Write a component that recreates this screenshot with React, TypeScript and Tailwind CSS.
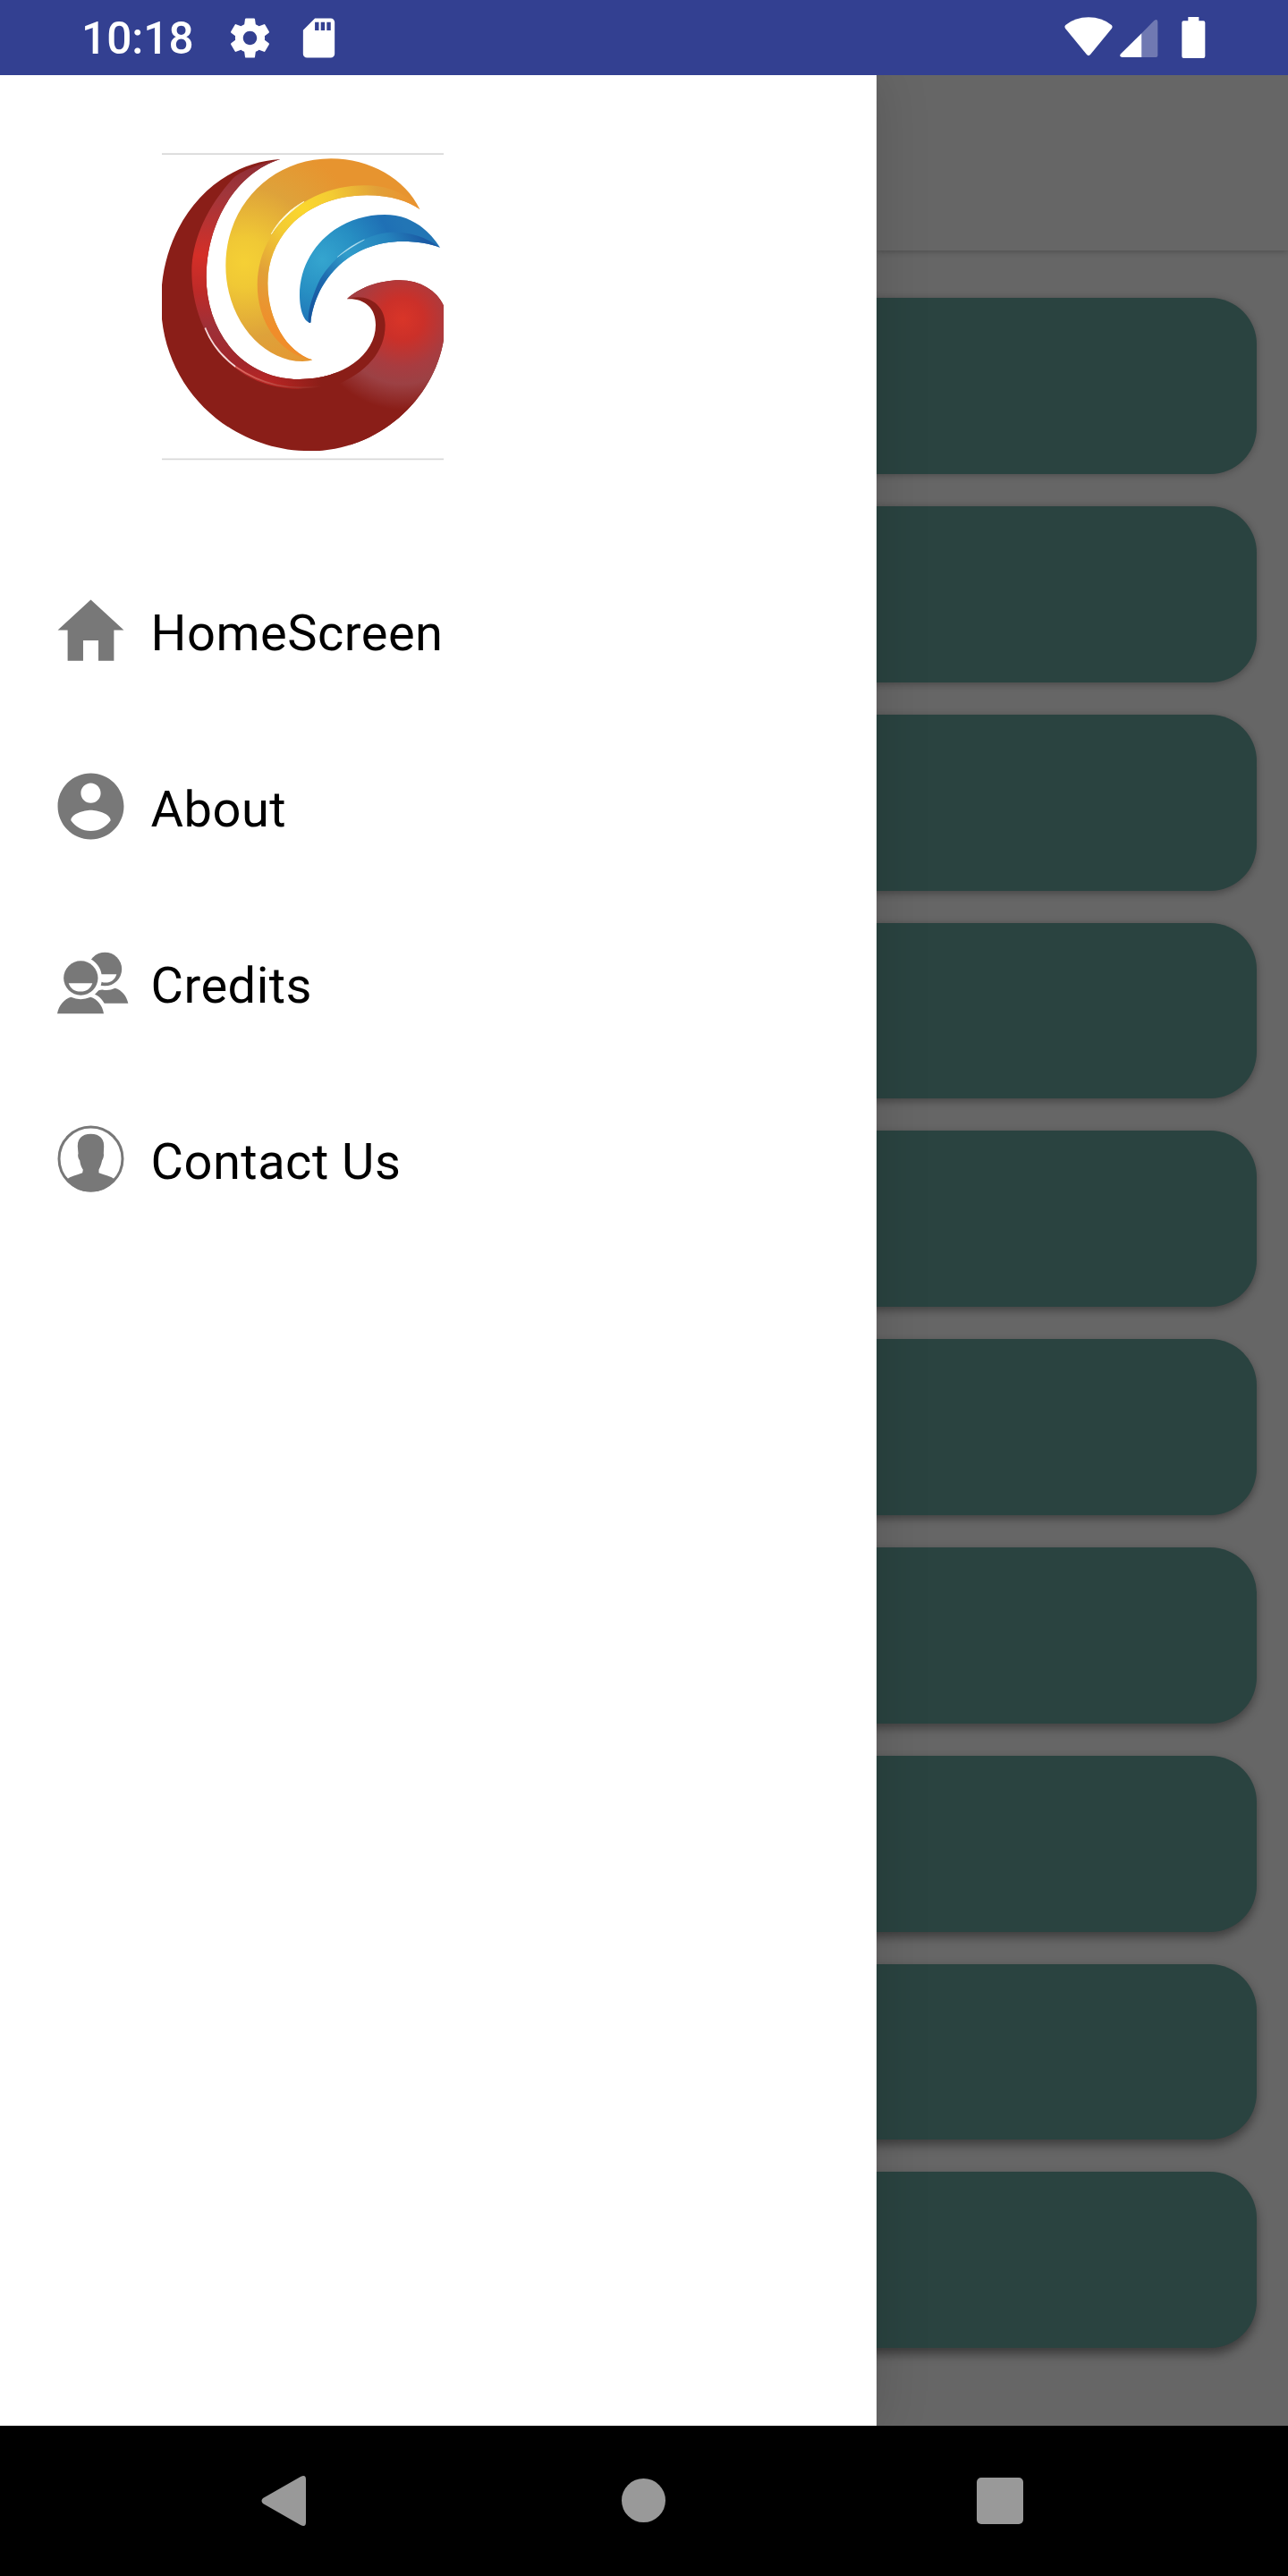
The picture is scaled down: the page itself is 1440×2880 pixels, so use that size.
import type { ReactNode } from 'react';
import { IoMdContact, IoMdHome } from 'react-icons/io';

function Logo() {
  return (
    <svg className="block h-[345px] w-[315px]" viewBox="63 60 945 1035">
      <defs>
        <linearGradient id="redBand" gradientUnits="userSpaceOnUse" x1="400" y1="84" x2="400" y2="850">
          <stop offset="0" stopColor="#8e2c34" />
          <stop offset="0.15" stopColor="#a0363b" />
          <stop offset="0.42" stopColor="#d42f28" />
          <stop offset="0.58" stopColor="#bd2a28" />
          <stop offset="0.74" stopColor="#9e3038" />
          <stop offset="0.9" stopColor="#a3262a" />
          <stop offset="1" stopColor="#c02522" />
        </linearGradient>
        <linearGradient id="bandFade" gradientUnits="userSpaceOnUse" x1="420" y1="0" x2="600" y2="0">
          <stop offset="0" stopColor="#8a1e18" stopOpacity="0" />
          <stop offset="1" stopColor="#8a1e18" />
        </linearGradient>
        <linearGradient id="rimLight" gradientUnits="userSpaceOnUse" x1="320" y1="0" x2="600" y2="0">
          <stop offset="0" stopColor="#e06a62" />
          <stop offset="1" stopColor="#8a1e18" />
        </linearGradient>
        <radialGradient id="redTip" gradientUnits="userSpaceOnUse" cx="870" cy="620" r="320">
          <stop offset="0" stopColor="#d93528" />
          <stop offset="0.22" stopColor="#cb3029" />
          <stop offset="0.5" stopColor="#a83c40" />
          <stop offset="0.68" stopColor="#9c4144" />
          <stop offset="0.95" stopColor="#8a1e18" />
        </radialGradient>
        <radialGradient id="gold" gradientUnits="userSpaceOnUse" cx="340" cy="430" r="420">
          <stop offset="0" stopColor="#f5d035" />
          <stop offset="0.2" stopColor="#f0c835" />
          <stop offset="0.6" stopColor="#dea23a" />
          <stop offset="1" stopColor="#e7942f" />
        </radialGradient>
        <radialGradient id="goldBand" gradientUnits="userSpaceOnUse" cx="540" cy="250" r="420">
          <stop offset="0" stopColor="#fbd72d" />
          <stop offset="0.25" stopColor="#f3cb33" />
          <stop offset="0.6" stopColor="#e2a038" />
          <stop offset="1" stopColor="#f08d2a" />
        </radialGradient>
        <radialGradient id="sky" gradientUnits="userSpaceOnUse" cx="600" cy="420" r="300">
          <stop offset="0" stopColor="#35a5cf" />
          <stop offset="0.4" stopColor="#278fc3" />
          <stop offset="0.8" stopColor="#1f70b5" />
          <stop offset="1" stopColor="#2275b5" />
        </radialGradient>
        <linearGradient id="skyBand" gradientUnits="userSpaceOnUse" x1="550" y1="630" x2="940" y2="350">
          <stop offset="0" stopColor="#15539b" />
          <stop offset="0.25" stopColor="#1d66ac" />
          <stop offset="0.5" stopColor="#319dcb" />
          <stop offset="0.8" stopColor="#2583bd" />
          <stop offset="1" stopColor="#1b5ba5" />
        </linearGradient>
        <clipPath id="redShape">
          <path d="M460 84C235 98 60 300 60 565C60 850 290 1063 560 1063C790 1063 975 890 1008 690L1008 575C985 525 930 490 860 490C790 490 720 518 684 553C740 550 780 580 780 640C780 740 670 822 525 822C330 822 212 660 212 480C212 300 310 130 460 84Z" />
        </clipPath>
      </defs>
      <path d="M63 66.500H1008M63 1090H1008" stroke="#d9d9d9" strokeWidth="5" />
      <g clipPath="url(#redShape)">
        <path d="M60 60H1012V1070H60Z" fill="#8a1e18" />
        <path d="M684 553C750 530 812 570 812 640C812 730 750 800 640 845L700 1070H1012V470H684Z" fill="url(#redTip)" />
        <path d="M460 84C370 105 320 130 300 150C210 250 163 360 163 460C163 640 270 850 520 855L640 835V700L300 600L300 300Z" fill="url(#redBand)" />
        <path d="M400 780H650V860H400Z" fill="url(#bandFade)" />
      </g>
      <path d="M208 650C235 715 270 750 310 780C268 748 230 708 208 650Z" fill="#fff" stroke="#f6dada" strokeWidth="5" />
      <path d="M310 780C400 842 490 860 600 845" fill="none" stroke="url(#rimLight)" strokeWidth="5" />
      <path d="M928 252C880 150 760 82 630 82C430 82 277 240 277 440C277 620 400 762 535 762C548 762 560 760 568 757C480 730 418 620 418 500C418 330 560 205 750 205C830 205 890 225 928 252Z" fill="url(#gold)" />
      <path d="M928 252C880 195 820 172 740 172C620 172 490 230 425 350C383 420 372 510 395 590C420 680 490 745 568 757C480 730 418 620 418 500C418 330 560 205 750 205C830 205 890 225 928 252Z" fill="url(#goldBand)" />
      <path d="M430 335C455 288 495 250 540 226C498 256 458 292 430 335Z" fill="#fff" stroke="#fdf3c0" strokeWidth="3" />
      <path d="M996 380C950 310 890 270 810 270C650 270 525 390 525 540C525 590 540 632 562 632C580 480 700 360 870 360C920 360 965 368 996 380Z" fill="url(#sky)" />
      <path d="M996 380C940 338 880 325 820 330C720 340 620 430 587 500C565 550 550 600 555 632H562C580 480 700 360 870 360C920 360 965 368 996 380Z" fill="url(#skyBand)" />
      <path d="M652 412C680 387 710 367 742 354C712 371 684 388 652 412Z" fill="#fff" stroke="#9fd6ea" strokeWidth="2" />
    </svg>
  );
}

function CreditsIcon() {
  return (
    <svg className="size-[91px]" viewBox="48 38.5 273 273" fill="#787878">
      <circle cx="232" cy="130" r="56.500" />
      <path d="M200 147H271C266 165 252 175 234 175C216 175 206 165 200 147Z" fill="#fff" />
      <path d="M190 225C196 208 212 198 224 199Q245 204 266 194C290 201 305 222 310 245H190Z" />
      <path d="M150 88C190 88 222 120 222 160C222 182 213 202 198 215C220 224 236 246 240 279H150Z" fill="#fff" />
      <circle cx="151" cy="160" r="57.500" />
      <path d="M110 177H190C184 195 170 205 150 205C130 205 116 195 110 177Z" fill="#fff" />
      <path d="M72 279C77 253 95 230 118 224Q150 238 184 224C206 230 224 253 228 279Z" />
    </svg>
  );
}

function ContactUsIcon() {
  return (
    <svg className="size-[91px]" viewBox="46.5 31 273 273" fill="#787878">
      <circle cx="183" cy="167.500" r="106.500" fill="none" stroke="#787878" strokeWidth="9" />
      <path d="M183 84C211 84 228 99 227 127L226 150C228 158 224 168 221 173C217 191 213 199 210 204L210 215C230 222 250 227 265 237C246 263 217 278.500 183 278.500C149 278.500 120 263 101 237C116 227 136 222 155 215L157 204C152 197 148 188 146 173C142 168 138 158 141 150L139 127C138 99 155 84 183 84Z" />
    </svg>
  );
}

function StatusBar() {
  return (
    <header className="flex h-[84px] shrink-0 items-center bg-[#334091] pr-[92px] pl-[91px] text-white">
      <span className="w-[162px] pt-[3px] text-[49.500px] leading-[81px] font-medium whitespace-nowrap">10:18</span>
      <svg className="size-[53px]" viewBox="0 0 24 24" fill="currentColor">
        <path d="M19.43 12.98c.04-.32.07-.64.07-.98s-.03-.66-.07-.98l2.11-1.65c.19-.15.24-.42.12-.64l-2-3.460c-.12-.22-.39-.3-.61-.22l-2.490 1c-.52-.4-1.080-.73-1.690-.98l-.38-2.650C14.460 2.180 14.250 2 14 2h-4c-.25 0-.46.18-.49.42l-.38 2.650c-.61.25-1.170.59-1.690.98l-2.490-1c-.23-.09-.49 0-.61.22l-2 3.460c-.13.22-.07.49.12.64l2.110 1.650c-.04.32-.07.65-.07.98s.03.66.07.98l-2.110 1.650c-.19.15-.24.42-.12.64l2 3.460c.12.22.39.3.61.22l2.490-1c.52.4 1.080.73 1.690.98l.38 2.650c.03.24.24.42.49.42h4c.25 0 .46-.18.49-.42l.38-2.650c.61-.25 1.170-.59 1.690-.98l2.490 1c.23.09.49 0 .61-.22l2-3.460c.12-.22.07-.49-.12-.64l-2.110-1.650zM12 15.500c-1.930 0-3.500-1.570-3.500-3.500s1.570-3.500 3.500-3.500 3.500 1.570 3.500 3.500-1.570 3.500-3.500 3.500z" />
      </svg>
      <svg className="ml-6 size-[53px]" viewBox="0 0 24 24" fill="currentColor">
        <path d="M18 2h-8L4.020 8 4 20c0 1.100.9 2 2 2h12c1.100 0 2-.9 2-2V4c0-1.100-.9-2-2-2zm-6 6.200h-2V4h2zm3 0h-2V4h2zm3 0h-2V4h2z" />
      </svg>
      <div className="ml-auto flex">
        <svg className="h-[50px] w-[54px]" viewBox="89 51 162 150" fill="currentColor">
          <path d="M93 84Q125 58 170 58Q215 58 247 84Q252 89 248 95L176 183Q170 190 164 183L92 95Q88 89 93 84Z" />
        </svg>
        <svg className="ml-2 h-[50px] w-[43px]" viewBox="275 51 129 150" fill="currentColor">
          <path d="M348 112L390 69Q402 61 402 74V186Q402 192 396 192H348Z" fillOpacity="0.3" />
          <path d="M348 112V192H282Q272 190 278 181Z" />
        </svg>
        <svg className="ml-[26px] h-[50px] w-[27px]" viewBox="482 51 81 150" fill="currentColor">
          <path d="M504 57H540V70H555Q561 70 561 76V189Q561 195 555 195H489Q483 195 483 189V76Q483 70 489 70H504Z" />
        </svg>
      </div>
    </header>
  );
}

function MenuItem({ icon, label }: { icon: ReactNode; label: string }) {
  return (
    <li className="flex h-[197px] items-center gap-[22px] pl-[55.500px]">
      {icon}
      <span className="pt-[7px] text-[56px] leading-[66px] tracking-[0.5px] whitespace-nowrap text-black">{label}</span>
    </li>
  );
}

function Drawer() {
  return (
    <aside className="z-10 w-[980px] shrink-0 bg-white shadow-[0_0_56px_rgba(0,0,0,0.15)]">
      <div className="pt-[86px] pl-[181px]">
        <Logo />
      </div>
      <ul className="mt-[91px]">
        <MenuItem icon={<IoMdHome className="size-[91px] text-[#787878]" />} label="HomeScreen" />
        <MenuItem icon={<IoMdContact className="size-[91px] text-[#787878]" />} label="About" />
        <MenuItem icon={<CreditsIcon />} label="Credits" />
        <MenuItem icon={<ContactUsIcon />} label="Contact Us" />
      </ul>
    </aside>
  );
}

function DimmedScreen() {
  return (
    <section className="flex min-w-0 flex-1 flex-col bg-[#666666]">
      <div className="h-[196px] shrink-0 shadow-[0_2px_6px_rgba(0,0,0,0.2)]" />
      <div className="-ml-20 flex flex-col gap-9 pt-[53.200px] pr-[35.500px]">
        {Array.from({ length: 10 }, (_, i) => (
          <div
            key={i}
            className="h-[196.800px] rounded-[52px] bg-[#2a4340]"
            style={{ boxShadow: `0 ${1 + i * 0.6}px ${8 + i * 0.4}px rgba(0,0,0,${0.28 + i * 0.015})` }}
          />
        ))}
      </div>
    </section>
  );
}

function NavigationBar() {
  return (
    <nav className="flex h-[168px] shrink-0 items-center bg-black pb-px pl-[292px] text-[#999999]">
      <svg className="h-14 w-[51px]" viewBox="0 0 51 56" fill="currentColor">
        <path d="M2 25L44 1Q50 -2 50 4V52Q50 58 44 55L2 31Q-1 28 2 25Z" />
      </svg>
      <div className="ml-[352px] size-[49px] rounded-full bg-current" />
      <div className="ml-[348px] size-[52px] rounded-[5px] bg-current" />
    </nav>
  );
}

export default function App() {
  return (
    <div className="flex h-[2880px] w-[1440px] flex-col overflow-hidden font-[Roboto,sans-serif]">
      <StatusBar />
      <main className="flex min-h-0 flex-1 overflow-hidden">
        <Drawer />
        <DimmedScreen />
      </main>
      <NavigationBar />
    </div>
  );
}
